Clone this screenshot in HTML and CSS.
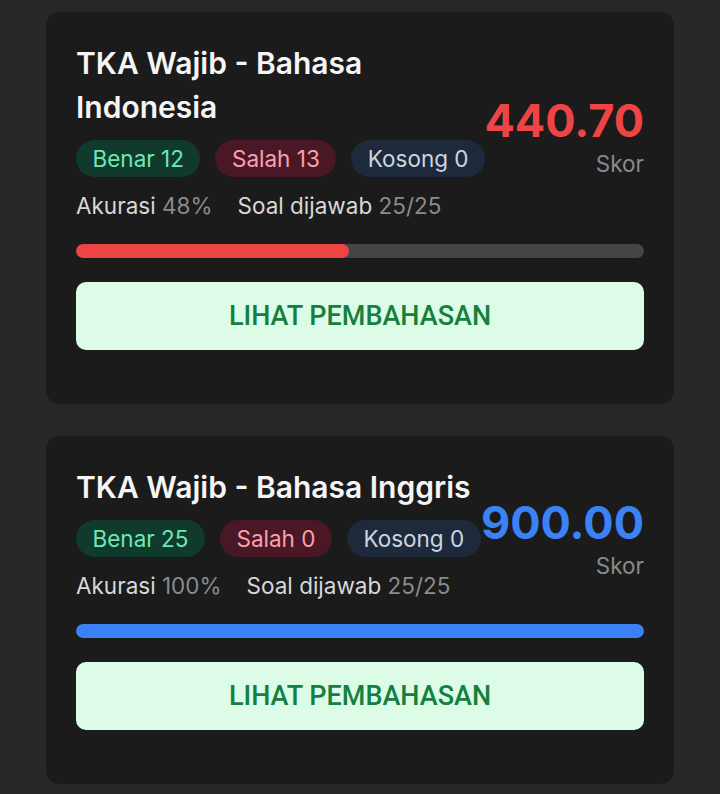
FILE: index.html
```html
<!DOCTYPE html>
<html lang="id">
<head>
    <meta charset="UTF-8">
    <meta name="viewport" content="width=device-width, initial-scale=1.0">
    <title>Hasil TKA</title>
    <link rel="stylesheet" href="styles.css">
</head>
<body>
    <div class="list">
        <div class="card">
            <div class="head">
                <div class="info">
                    <div class="title">TKA Wajib - Bahasa Indonesia</div>
                    <div class="badges">
                        <span class="badge benar">Benar 12</span>
                        <span class="badge salah">Salah 13</span>
                        <span class="badge kosong">Kosong 0</span>
                    </div>
                    <div class="stats">
                        <span>Akurasi <em>48%</em></span>
                        <span>Soal dijawab <em>25/25</em></span>
                    </div>
                </div>
                <div class="score">
                    <div class="value red">440.70</div>
                    <div class="label">Skor</div>
                </div>
            </div>
            <div class="bar"><div class="fill red-bg" style="width: 48%"></div></div>
            <button class="btn">LIHAT PEMBAHASAN</button>
        </div>

        <div class="card">
            <div class="head">
                <div class="info">
                    <div class="title">TKA Wajib - Bahasa Inggris</div>
                    <div class="badges">
                        <span class="badge benar">Benar 25</span>
                        <span class="badge salah">Salah 0</span>
                        <span class="badge kosong">Kosong 0</span>
                    </div>
                    <div class="stats">
                        <span>Akurasi <em>100%</em></span>
                        <span>Soal dijawab <em>25/25</em></span>
                    </div>
                </div>
                <div class="score">
                    <div class="value blue">900.00</div>
                    <div class="label">Skor</div>
                </div>
            </div>
            <div class="bar"><div class="fill blue-bg" style="width: 100%"></div></div>
            <button class="btn">LIHAT PEMBAHASAN</button>
        </div>
    </div>
</body>
</html>
```

FILE: styles.css
```css
body {
    margin: 0;
    background-color: #272727;
    font-family: Inter, "Noto Sans", sans-serif;
}
.list {
    display: flex;
    flex-direction: column;
    gap: 32px;
    padding: 12px 46px 40px;
}
.card {
    background: #1b1b1b;
    border-radius: 14px;
    padding: 29px 30px 54px;
}
.head {
    display: flex;
    align-items: center;
    justify-content: space-between;
    gap: 4px;
}
.info {
    flex: 1;
    min-width: 0;
}
.title {
    color: #f5f5f5;
    font-size: 30px;
    font-weight: 600;
    line-height: 44px;
}
.badges {
    display: flex;
    flex-wrap: nowrap;
    gap: 15px;
    margin-top: 11px;
}
.badge {
    font-size: 22.5px;
    line-height: 27px;
    padding: 5px 16.5px;
    border-radius: 20px;
    white-space: nowrap;
}
.benar {
    background-color: #0f3a2c;
    color: #6ee7b7;
}
.salah {
    background-color: #4a1824;
    color: #fb9fb1;
}
.kosong {
    background-color: #1e293b;
    color: #cbd5e1;
}
.stats {
    display: flex;
    gap: 25px;
    margin-top: 14px;
    font-size: 22.5px;
    line-height: 30px;
    color: #d8d8d8;
}
.stats em {
    font-style: normal;
    color: #8a8a8a;
}
.score {
    flex-shrink: 0;
    padding-top: 10px;
    text-align: right;
}
.value {
    font-size: 45px;
    font-weight: 700;
    line-height: 52px;
}
.label {
    margin-top: 3px;
    font-size: 22.5px;
    line-height: 28px;
    color: #8a8a8a;
}
.red { color: #ef4444; }
.blue { color: #3b82f6; }
.red-bg { background-color: #ef4444; }
.blue-bg { background-color: #3b82f6; }
.bar {
    margin-top: 23px;
    height: 14px;
    border-radius: 7px;
    background-color: #454545;
    overflow: hidden;
}
.fill {
    height: 100%;
    border-radius: 7px;
}
.btn {
    display: block;
    width: 100%;
    height: 68px;
    margin-top: 24px;
    border: none;
    border-radius: 10px;
    background-color: #dcfce7;
    color: #15803d;
    font-family: Roboto, sans-serif;
    font-size: 27px;
    font-weight: 500;
    cursor: pointer;
}
```
